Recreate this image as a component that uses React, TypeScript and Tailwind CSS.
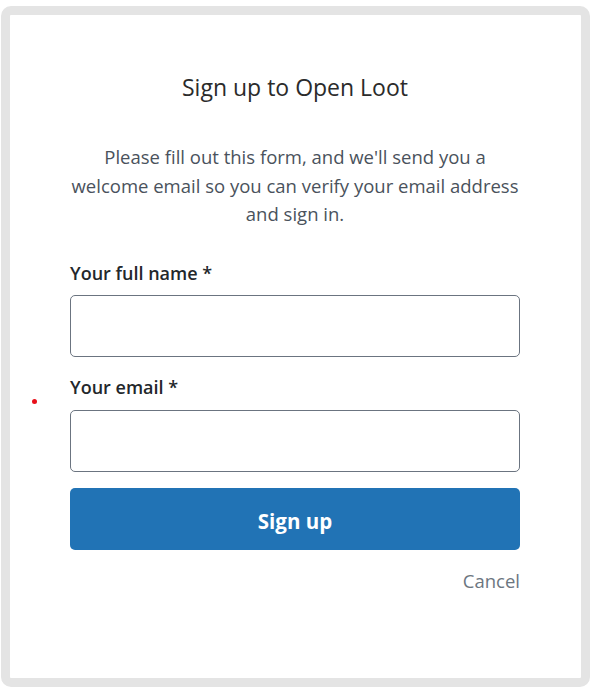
import React from "react";

export default function App() {
  return (
    <div
      className="relative w-[592px] h-[691px] bg-white"
      style={{ fontFamily: '"Open Sans", "Noto Sans", sans-serif' }}
    >
      <div className="ml-[1px] pt-[6px]">
        <div className="w-[589px] h-[681px] border-[9px] border-[#e4e4e4] rounded-[10px] bg-white pl-[60px] pr-[61px] pt-[56px]">
          <h1 className="text-center text-[23px] leading-[32px] text-[#2b2b2b]">
            Sign up to Open Loot
          </h1>
          <p className="mt-[40px] text-center text-[18.5px] leading-[28.5px] text-[#4a525c] whitespace-nowrap">
            Please fill out this form, and we'll send you a
            <br />
            welcome email so you can verify your email address
            <br />
            and sign in.
          </p>
          <label className="block mt-[32px] text-[18px] leading-[24px] font-semibold text-[#23272b]">
            Your full name *
          </label>
          <input
            type="text"
            className="mt-[10px] block w-full h-[62px] rounded-[5px] border border-[#6b7480] bg-white"
          />
          <label className="block mt-[18px] text-[18px] leading-[24px] font-semibold text-[#23272b]">
            Your email *
          </label>
          <input
            type="email"
            className="mt-[11px] block w-full h-[62px] rounded-[5px] border border-[#6b7480] bg-white"
          />
          <button className="mt-[16px] w-full h-[62px] pt-[6px] rounded-[5px] bg-[#2173b5] text-white text-[20.5px] font-bold">
            Sign up
          </button>
          <div className="mt-[19px] text-right text-[18.5px] leading-[24px] text-[#6c7680]">
            Cancel
          </div>
        </div>
      </div>
      <div className="absolute left-[32px] top-[399px] w-[5px] h-[5px] rounded-full bg-[#e8101a]" />
    </div>
  );
}
